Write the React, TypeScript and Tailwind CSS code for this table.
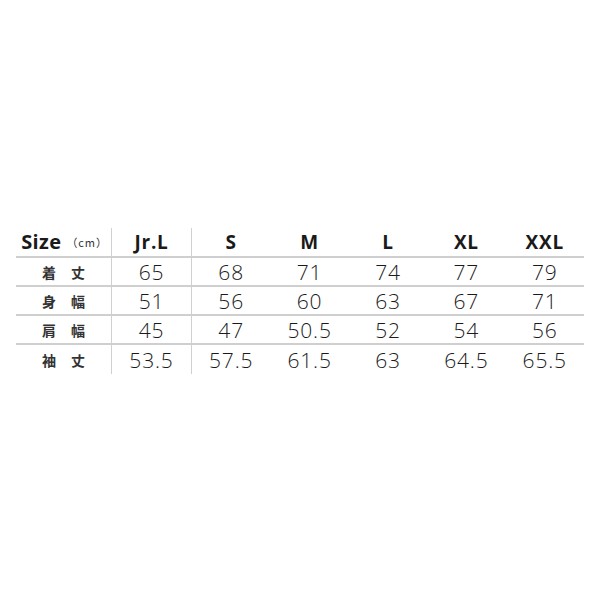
const sizes = ['Jr.L', 'S', 'M', 'L', 'XL', 'XXL'];

const rows: { label: [string, string]; values: string[] }[] = [
  { label: ['着', '丈'], values: ['65', '68', '71', '74', '77', '79'] },
  { label: ['身', '幅'], values: ['51', '56', '60', '63', '67', '71'] },
  { label: ['肩', '幅'], values: ['45', '47', '50.5', '52', '54', '56'] },
  { label: ['袖', '丈'], values: ['53.5', '57.5', '61.5', '63', '64.5', '65.5'] },
];

const grid = 'grid grid-cols-[96px_80px_repeat(5,78.4px)]';

export default function App() {
  return (
    <div className="w-[600px] h-[600px] bg-white pt-[228px] pl-4 text-[#1a1a1a]">
      <div className="w-[568px]">
        <div className={`${grid} h-[30px] border-b-2 border-[#cfcfcf]`}>
          <div className="flex items-center justify-center gap-[5px] pl-[2px] border-r border-[#d0d0d0] font-['Open_Sans',sans-serif]">
            <span className="text-[20px] font-bold tracking-[0.02em] leading-none">Size</span>
            <span className="text-[11px] text-[#333] font-['Noto_Sans_CJK_JP',sans-serif] leading-none tracking-[0.08em]">（cm）</span>
          </div>
          {sizes.map((s, i) => (
            <div
              key={s}
              className={`flex items-center justify-center font-['Open_Sans',sans-serif] text-[19px] font-bold leading-none tracking-[0.04em] ${i === 0 ? 'border-r border-[#d0d0d0]' : ''}`}
            >
              {s}
            </div>
          ))}
        </div>
        {rows.map((r, ri) => (
          <div
            key={ri}
            className={`${grid} h-[29px] ${ri < rows.length - 1 ? 'border-b-2 border-[#cfcfcf]' : ''}`}
          >
            <div className="flex items-center justify-center gap-[15px] border-r border-[#d0d0d0] font-['Noto_Sans_CJK_JP',sans-serif] text-[14px] font-bold leading-none text-[#333]">
              <span>{r.label[0]}</span>
              <span>{r.label[1]}</span>
            </div>
            {r.values.map((v, i) => (
              <div
                key={i}
                className={`flex items-center justify-center font-['Open_Sans',sans-serif] font-light text-[21px] leading-none tracking-[0.04em] pt-[2px] ${i === 0 ? 'border-r border-[#d0d0d0]' : ''}`}
              >
                {v}
              </div>
            ))}
          </div>
        ))}
      </div>
    </div>
  );
}
